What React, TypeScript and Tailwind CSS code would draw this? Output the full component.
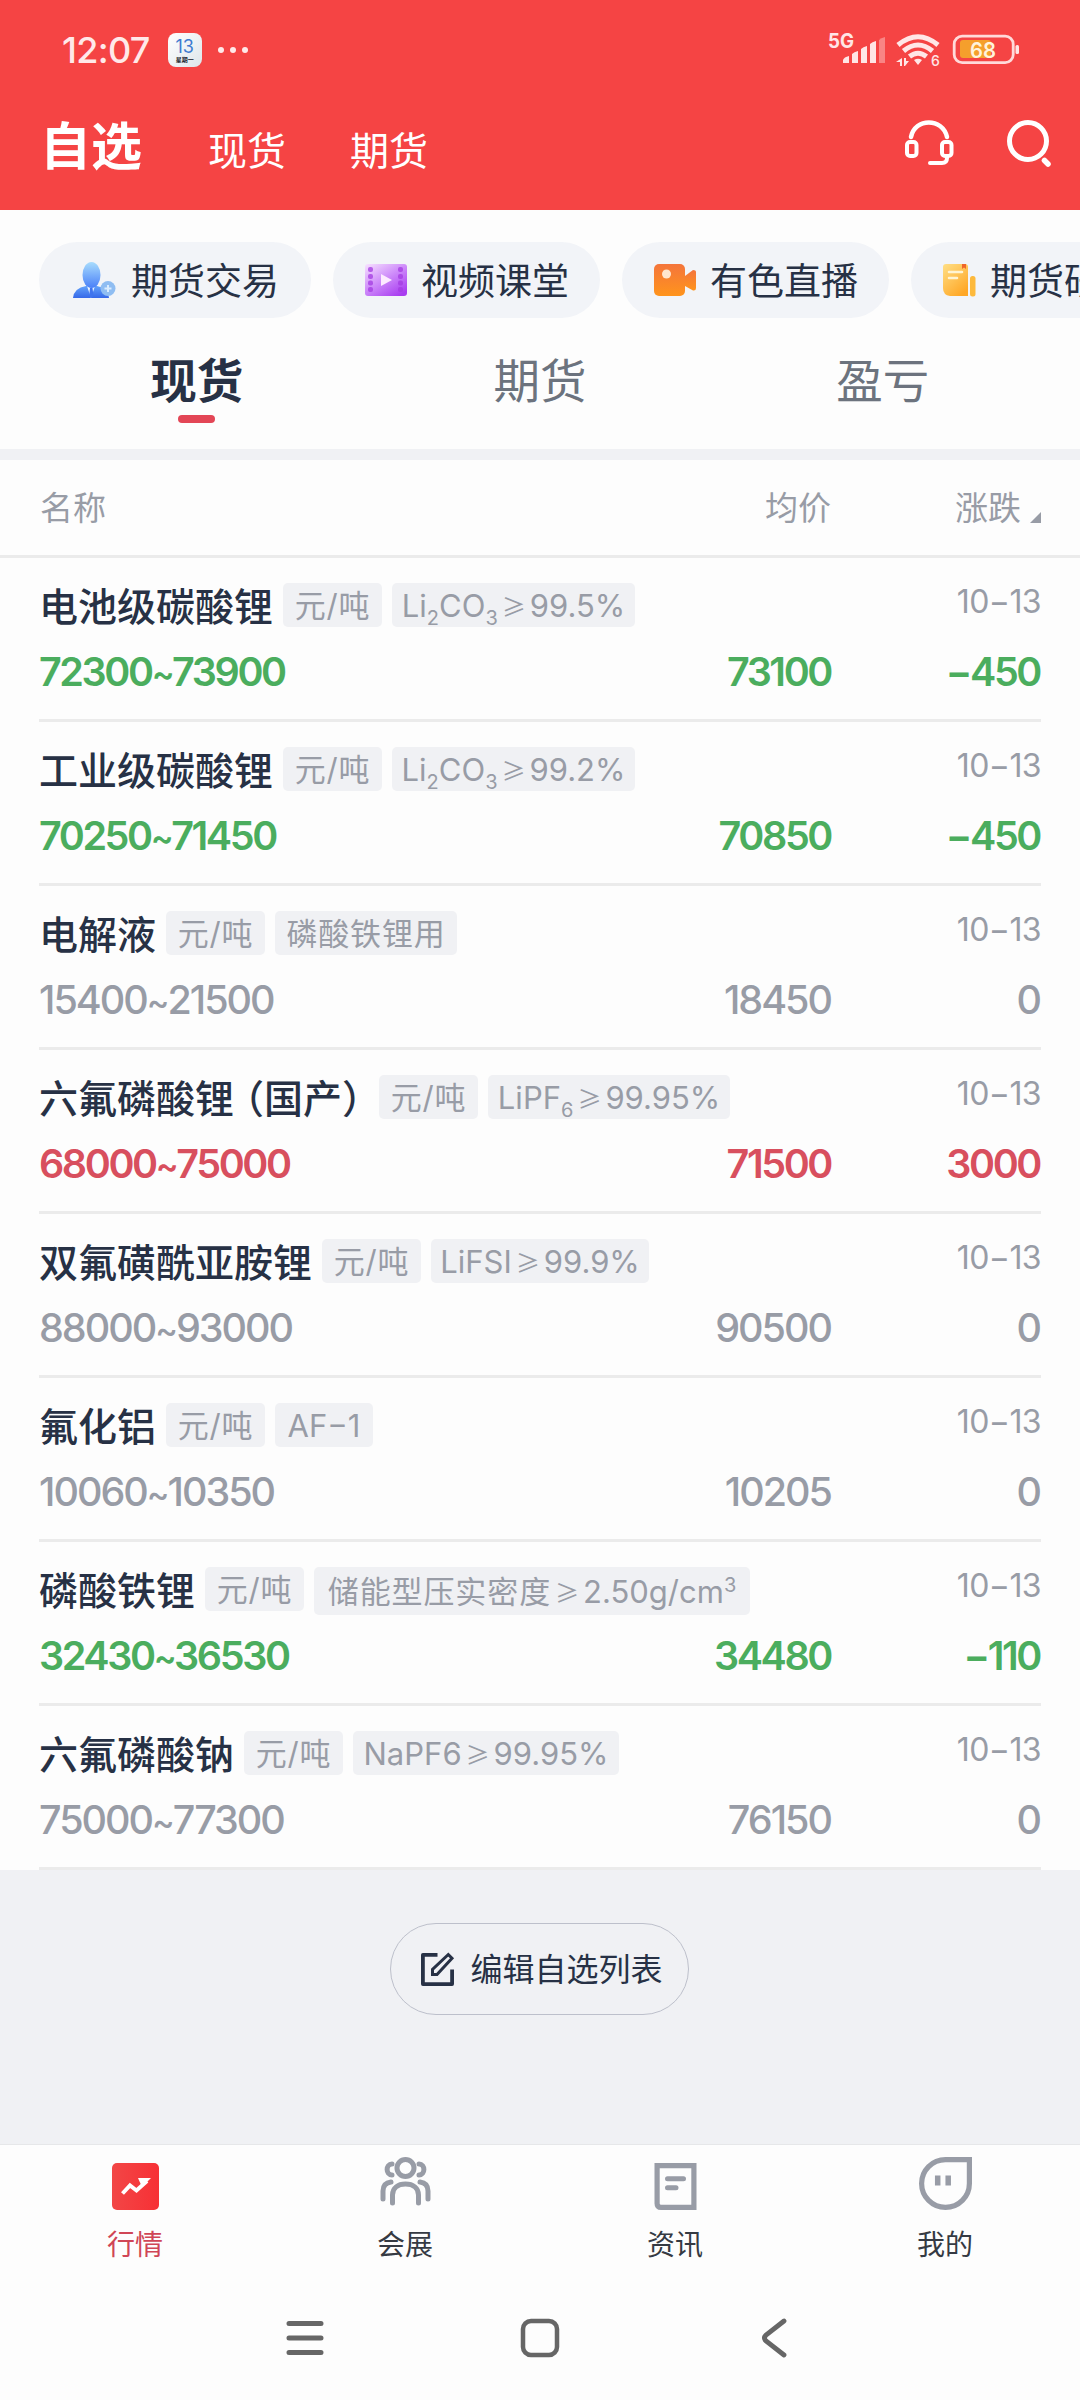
import type { ReactNode } from 'react';

type Trend = 'up' | 'down' | 'flat';

interface Quote {
    name: ReactNode;
    spec?: ReactNode;
    specClass: string;
    range: [string, string];
    avg: string;
    change: string;
    trend: Trend;
}

const trendClass: Record<Trend, string> = {
    up: 'text-[#d84f5e] font-semibold tracking-[-2.4px]',
    down: 'text-[#4bad5e] font-semibold tracking-[-2.4px]',
    flat: 'text-[#989ca6] font-medium tracking-[-2px]',
};

// the CJK face has the slanted form of this sign
function Gte() {
    return <span className="relative -top-px mx-[4px] font-['Noto_Sans_CJK_SC'] text-[24px] tracking-normal">≥</span>;
}

function Sub({ children }: { children: ReactNode }) {
    return <span className="relative top-[8px] text-[20px]">{children}</span>;
}

const quotes: Quote[] = [
    {
        name: '电池级碳酸锂',
        spec: <>Li<Sub>2</Sub>CO<Sub>3</Sub><Gte />99.5%</>,
        specClass: 'w-[243px]',
        range: ['72300', '73900'],
        avg: '73100',
        change: '−450',
        trend: 'down',
    },
    {
        name: '工业级碳酸锂',
        spec: <>Li<Sub>2</Sub>CO<Sub>3</Sub><Gte />99.2%</>,
        specClass: 'w-[243px]',
        range: ['70250', '71450'],
        avg: '70850',
        change: '−450',
        trend: 'down',
    },
    {
        name: '电解液',
        spec: '磷酸铁锂用',
        specClass: 'w-[182px] tracking-[0.8px]',
        range: ['15400', '21500'],
        avg: '18450',
        change: '0',
        trend: 'flat',
    },
    {
        name: (
            <>
                六氟磷酸锂<span className="-ml-[9px]">（</span>国产<span className="-mr-[12px]">）</span>
            </>
        ),
        spec: <>LiPF<Sub>6</Sub><Gte />99.95%</>,
        specClass: 'w-[242px]',
        range: ['68000', '75000'],
        avg: '71500',
        change: '3000',
        trend: 'up',
    },
    {
        name: '双氟磺酰亚胺锂',
        spec: <>LiFSI<Gte />99.9%</>,
        specClass: 'w-[218px]',
        range: ['88000', '93000'],
        avg: '90500',
        change: '0',
        trend: 'flat',
    },
    {
        name: '氟化铝',
        spec: 'AF−1',
        specClass: 'w-[98px]',
        range: ['10060', '10350'],
        avg: '10205',
        change: '0',
        trend: 'flat',
    },
    {
        name: '磷酸铁锂',
        spec: (
            <>
                <span className="tracking-[0.9px]">储能型压实密度</span><Gte />2.50g/cm
                <span className="relative -top-[11px] text-[20px]">3</span>
            </>
        ),
        specClass: 'w-[436px] h-12 pt-[2px]',
        range: ['32430', '36530'],
        avg: '34480',
        change: '−110',
        trend: 'down',
    },
    {
        name: '六氟磷酸钠',
        spec: <>NaPF6<Gte />99.95%</>,
        specClass: 'w-[266px]',
        range: ['75000', '77300'],
        avg: '76150',
        change: '0',
        trend: 'flat',
    },
];

export default function App() {
    return (
        <div className="flex h-[2400px] w-[1080px] flex-col overflow-hidden bg-[#fdfdfd] font-[Inter,'Noto_Sans_CJK_SC',sans-serif] text-[#273145]">
            <header className="h-[210px] shrink-0 bg-[#f54444] text-white">
                <StatusBar />
                <div className="flex h-[110px] items-center pl-10">
                    <h1 className="mt-[-18px] text-[51px] leading-none font-bold">自选</h1>
                    <span className="ml-[66px] mt-[-9px] text-[39px] leading-none">现货</span>
                    <span className="ml-[64px] mt-[-9px] text-[39px] leading-none">期货</span>
                    <HeadsetIcon />
                    <SearchIcon />
                </div>
            </header>

            <div className="flex shrink-0 gap-[22px] overflow-hidden pt-8 pl-[39px]">
                <Chip icon={<TraderIcon />} label="期货交易" />
                <Chip icon={<FilmIcon />} label="视频课堂" />
                <Chip icon={<CameraIcon />} label="有色直播" />
                <Chip icon={<DocIcon />} label="期货研究" />
            </div>

            <div className="grid h-[131px] shrink-0 grid-cols-3 px-[26px] pt-[39px] text-center text-[46.500px] leading-[48px]">
                <div className="flex flex-col items-center pr-px">
                    <span className="font-bold">现货</span>
                    <span className="mt-[10px] h-2 w-[37px] rounded-full bg-[#e34656]" />
                </div>
                <span className="text-[#6c737e]">期货</span>
                <span className="text-[#6c737e]">盈亏</span>
            </div>

            <div className="h-[11px] shrink-0 bg-[#f0f1f4]" />

            <div className="flex h-[98px] shrink-0 items-center border-b-[3px] border-[#ebebeb] px-[39px] pt-[2px] text-[33px] leading-none text-[#989ca6]">
                <span className="flex-1 pl-px">名称</span>
                <span>均价</span>
                <span className="flex w-[210px] items-end justify-end">
                    涨跌
                    <svg viewBox="0 0 11 11" className="mb-[2px] ml-[9px] size-[11px]" fill="currentColor">
                        <path d="M11 0V11H0Z" />
                    </svg>
                </span>
            </div>

            <div className="shrink-0 px-[39px]">
                {quotes.map((q) => (
                    <QuoteRow key={q.range[0]} quote={q} />
                ))}
            </div>

            <div className="flex h-[275px] shrink-0 justify-center border-b border-[#e6e7e9] bg-[#f0f1f4] pt-[53px] pr-[2px]">
                <button className="flex h-[92px] w-[299px] items-center rounded-full border border-[#bdc0cb] pl-[29px] text-[32px] leading-none">
                    <EditIcon />
                    <span className="mt-px ml-[16px]">编辑自选列表</span>
                </button>
            </div>

            <nav className="grid h-[135px] shrink-0 grid-cols-4 text-[#353a43]">
                <TabItem icon={<MarketIcon />} label="行情" active />
                <TabItem icon={<PeopleIcon />} label="会展" />
                <TabItem icon={<NewsIcon />} label="资讯" />
                <TabItem icon={<MineIcon />} label="我的" />
            </nav>

            <SystemNav />
        </div>
    );
}

function QuoteRow({ quote }: { quote: Quote }) {
    const [low, high] = quote.range;

    return (
        <div className="h-[164px] border-b-[3px] border-[#ebebeb] pt-[25px]">
            <div className="flex h-11 items-start">
                <span className="mr-[10px] text-[39px] leading-[47px] font-medium whitespace-nowrap">{quote.name}</span>
                <Tag className="w-[99px] tracking-[0.8px]">元/吨</Tag>
                <Tag className={`ml-[10px] ${quote.specClass}`}>{quote.spec}</Tag>
                <span className="ml-auto text-[32px] leading-[37px] tracking-[-0.6px] text-[#989ca6]">10−13</span>
            </div>
            <div className={`mt-[25px] flex pr-px text-[39.500px] leading-[40px] ${trendClass[quote.trend]}`}>
                <span className="flex-1">
                    {low}
                    <span className="text-[34px]">~</span>
                    {high}
                </span>
                <span>{quote.avg}</span>
                <span className="w-[209px] text-right">{quote.change}</span>
            </div>
        </div>
    );
}

function Tag({ className, children }: { className: string; children: ReactNode }) {
    return (
        <span
            className={`h-11 rounded-[5px] bg-[#f0f1f4] text-center text-[31px] leading-[45px] whitespace-nowrap text-[#989ca6] ${className}`}
        >
            {children}
        </span>
    );
}

function Chip({ icon, label }: { icon: ReactNode; label: string }) {
    return (
        <div className="flex h-[76px] shrink-0 items-center gap-[14px] rounded-full bg-[#f2f4f8] pr-[31px] pl-8 text-[37px] leading-none first:pr-8">
            {icon}
            <span className="mt-[2px]">{label}</span>
        </div>
    );
}

function TabItem({ icon, label, active = false }: { icon: ReactNode; label: string; active?: boolean }) {
    return (
        <div className="flex flex-col items-center pt-3">
            {icon}
            <span className={`mt-[19px] text-[28px] leading-[32px] ${active ? 'text-[#d04656]' : ''}`}>{label}</span>
        </div>
    );
}

function StatusBar() {
    return (
        <div className="flex h-[100px] items-center pl-[62px]">
            <span className="text-[36px] leading-none font-medium tracking-[-0.7px] text-[#ffe9e9]">12:07</span>
            <div className="ml-[18px] flex h-[34px] w-[34px] flex-col items-center rounded-[8px] bg-linear-to-br from-white to-[#dde5ea] pt-[5px]">
                <span className="text-[18px] leading-[18px] text-[#3f7bd0]">13</span>
                <span className="text-[6px] leading-[7px] font-bold text-[#1c2530]">星期一</span>
            </div>
            <svg viewBox="0 0 30 6" className="ml-4 h-[6px] w-[30px]" fill="#ffe9e9">
                <circle cx="3" cy="3" r="3" />
                <circle cx="15" cy="3" r="3" />
                <circle cx="27" cy="3" r="3" />
            </svg>
            <svg viewBox="828 30 194 40" className="mr-[58px] ml-auto h-10 w-[194px]" fill="#ffe6e6">
                <text x="828" y="48" fontSize="20" fontWeight="700" textLength="26" lengthAdjust="spacingAndGlyphs">
                    5G
                </text>
                <path d="M843 60q1-3 6-4v7h-6zM852 54q2-2 6-3v12h-6zM861 49q2-2 6-3v17h-6zM870 44q2-2 6-3v22h-6z" />
                <path d="M879 40q2-2 6-3v26h-6z" opacity=".4" />
                <g fill="none" stroke="#ffe6e6" strokeWidth="5">
                    <path d="M898 45Q918 28.500 938 45" />
                    <path d="M903.500 51Q918 39 932.500 51" />
                    <path d="M909.500 56.500Q918 50 926.500 56.500" />
                </g>
                <path d="M914 60q4-2.500 8 0l-4 5zM896 62l6-4v8h-2v-4zM904 58h2v3h3l-4 5h-1z" />
                <text x="931" y="66" fontSize="14" fontWeight="500">6</text>
                <rect x="960" y="40" width="31" height="18" rx="3" fill="#f59f2c" />
                <rect x="954.200" y="36.200" width="59" height="26.500" rx="8" fill="none" stroke="#ffdada" strokeWidth="2.800" />
                <rect x="1015.500" y="45" width="3.500" height="9" rx="1.500" />
                <text x="970" y="57.500" fontSize="21" fontWeight="600" fill="#fff3dc" textLength="26" lengthAdjust="spacingAndGlyphs">
                    68
                </text>
            </svg>
        </div>
    );
}

function HeadsetIcon() {
    return (
        <svg viewBox="0 0 50 46" className="mt-[-24px] ml-auto h-[46px] w-[50px]" fill="none" stroke="white" strokeWidth="4" strokeLinecap="round">
            <path d="M7 17C11 -2.500 38.500 -2.500 43 17" strokeWidth="4.500" />
            <rect x="3" y="22" width="9.500" height="14" rx="3" />
            <rect x="38" y="22" width="9.500" height="14" rx="3" />
            <path d="M43 37v1q0 5-5 5H26" />
        </svg>
    );
}

function SearchIcon() {
    return (
        <svg viewBox="0 0 46 48" className="mt-[-24px] mr-[27px] ml-[53px] h-12 w-[46px]" fill="none" stroke="white" strokeLinecap="round">
            <circle cx="21" cy="22" r="18.500" strokeWidth="5" />
            <path d="M37.500 41.500l3.500 3.500" strokeWidth="5.500" />
        </svg>
    );
}

function TraderIcon() {
    return (
        <svg viewBox="0 0 46 38" className="h-[38px] w-[46px]">
            <defs>
                <linearGradient id="head" x1="0" y1="0" x2="0" y2="1">
                    <stop offset="0" stopColor="#a8dcfd" />
                    <stop offset="1" stopColor="#4a80f8" />
                </linearGradient>
                <linearGradient id="body" x1="0" y1="0" x2="0" y2="1">
                    <stop offset="0" stopColor="#62a2fb" />
                    <stop offset="1" stopColor="#3668e8" />
                </linearGradient>
            </defs>
            <path d="M2 37q1-10 13-12h11q11 2 12 12z" fill="url(#body)" />
            <path d="M16 25l4 12 4-12z" fill="#eaf4ff" />
            <path d="M19 27h2.500l1 8-2.200 2-2.200-2z" fill="#3f74ee" />
            <ellipse cx="20.500" cy="14" rx="9" ry="13" fill="url(#head)" />
            <circle cx="37" cy="27.500" r="7.500" fill="#8fbdf2" />
            <path d="M37 24v7M33.500 27.500h7" stroke="#d9ecff" strokeWidth="2" />
        </svg>
    );
}

function FilmIcon() {
    return (
        <svg viewBox="0 0 42 34" className="h-[34px] w-[42px]">
            <defs>
                <linearGradient id="film" x1="0" y1="0" x2="0.800" y2="1">
                    <stop offset="0" stopColor="#f7e2ff" />
                    <stop offset=".5" stopColor="#cf8dfa" />
                    <stop offset="1" stopColor="#a93df0" />
                </linearGradient>
            </defs>
            <rect y="1" width="42" height="32" rx="3" fill="url(#film)" />
            <g fill="#a43be2" opacity=".75">
                <rect x="3" y="4" width="5" height="5" rx="2" />
                <rect x="3" y="11" width="5" height="5" rx="2" />
                <rect x="3" y="17.500" width="5" height="5" rx="2" />
                <rect x="3" y="24" width="5" height="5" rx="2" />
                <rect x="33" y="4" width="5" height="5" rx="2" />
                <rect x="33" y="11" width="5" height="5" rx="2" />
                <rect x="33" y="17.500" width="5" height="5" rx="2" />
                <rect x="33" y="24" width="5" height="5" rx="2" />
            </g>
            <path d="M16 11v12l11-6z" fill="#fdeaff" />
        </svg>
    );
}

function CameraIcon() {
    return (
        <svg viewBox="0 0 42 34" className="h-[34px] w-[42px]">
            <defs>
                <linearGradient id="cam" x1="0" y1="0" x2="0" y2="1">
                    <stop offset="0" stopColor="#f4753c" />
                    <stop offset="1" stopColor="#ff941c" />
                </linearGradient>
            </defs>
            <rect y="1" width="31" height="32" rx="5" fill="url(#cam)" />
            <path d="M31 13l8-6q3 0 3 2v16q0 3-3 2.500L31 23z" fill="url(#cam)" />
            <circle cx="12.500" cy="11" r="4.500" fill="#ffe6cf" />
        </svg>
    );
}

function DocIcon() {
    return (
        <svg viewBox="0 0 33 34" className="h-[34px] w-[33px]">
            <defs>
                <linearGradient id="doc" x1="0" y1="0" x2="0.700" y2="1">
                    <stop offset="0" stopColor="#ffdf86" />
                    <stop offset="1" stopColor="#ffa726" />
                </linearGradient>
            </defs>
            <path d="M3 1h19q3 0 3 3v29H7q-7-1-7-8V4q0-3 3-3z" fill="url(#doc)" />
            <rect x="27" y="13" width="5.500" height="20.500" rx="2.500" fill="#fdb93c" />
            <path d="M6 9h13M6 15h8" stroke="#fff4d2" strokeWidth="2.600" strokeLinecap="round" />
            <path d="M19 1h4v5l-2-1.500L19 6z" fill="#f0662a" />
        </svg>
    );
}

function EditIcon() {
    return (
        <svg viewBox="0 0 35 35" className="size-[35px]" fill="none" stroke="#273145" strokeWidth="3.800">
            <path d="M17.500 2.900H2.900v29.200h29.200V17.500" strokeLinejoin="round" />
            <path d="M12.500 22.500v-5L28.300 2.500l3.700 3.700L17 22.500z" strokeWidth="3" />
        </svg>
    );
}

function MarketIcon() {
    return (
        <svg viewBox="0 0 53 53" className="size-[53px]">
            <defs>
                <linearGradient id="mk">
                    <stop offset="0" stopColor="#f24646" />
                    <stop offset="1" stopColor="#f73035" />
                </linearGradient>
            </defs>
            <rect x="3" y="6" width="47" height="47" rx="5" fill="url(#mk)" />
            <path d="M13.500 36.500l7.500-8 6.500 5L38 24" fill="none" stroke="white" strokeWidth="4" />
            <path d="M29 21h13l-9 9z" fill="white" />
        </svg>
    );
}

function PeopleIcon() {
    return (
        <svg viewBox="0 0 53 53" className="size-[53px]" fill="none" stroke="#989ca6" strokeWidth="5" strokeLinecap="round">
            <circle cx="26.500" cy="11" r="8.500" />
            <path d="M13.500 46V38C13.500 31 19 27 26.500 27S39.500 31 39.500 38v8" />
            <path d="M13 7C6.500 7 6.500 18 13 18M40 7c6.500 0 6.500 11 0 11" />
            <path d="M12 25q-8 1-8 9v8M41 25q8 1 8 9v8" />
        </svg>
    );
}

function NewsIcon() {
    return (
        <svg viewBox="0 0 53 53" className="size-[53px]" fill="none" stroke="#989ca6" strokeWidth="5.200">
            <path d="M8.100 8.600H44.900V50.400H12.100Q8.100 50.400 8.100 46.400Z" />
            <path d="M18.500 21.700h16M18.500 30.700h8.500" strokeLinecap="round" strokeWidth="5" />
        </svg>
    );
}

function MineIcon() {
    return (
        <svg viewBox="0 0 53 53" className="size-[53px]" fill="none" stroke="#989ca6" strokeWidth="5.200">
            <path d="M26.500 2.600H50.400V26.500A23.900 23.900 0 1 1 26.500 2.600Z" />
            <path d="M18.700 18.500v10M29.200 18.500v10" strokeWidth="5.500" />
        </svg>
    );
}

function SystemNav() {
    return (
        <div className="flex h-[116px] shrink-0 items-center pl-[286px]">
            <svg viewBox="0 0 38 40" className="h-10 w-[38px]" stroke="#666" strokeWidth="5" strokeLinecap="round">
                <path d="M3 5.500h32M3 20h32M3 34.500h32" />
            </svg>
            <svg viewBox="0 0 40 40" className="ml-[196px] size-10" fill="none" stroke="#666" strokeWidth="4.500">
                <rect x="3" y="3" width="34" height="34" rx="8" />
            </svg>
            <svg viewBox="0 0 26 40" className="ml-[201px] h-10 w-[26px]" fill="none" stroke="#666" strokeWidth="4.800" strokeLinecap="round">
                <path d="M23 3L5 17Q2 20 5 23L23 37" />
            </svg>
        </div>
    );
}
